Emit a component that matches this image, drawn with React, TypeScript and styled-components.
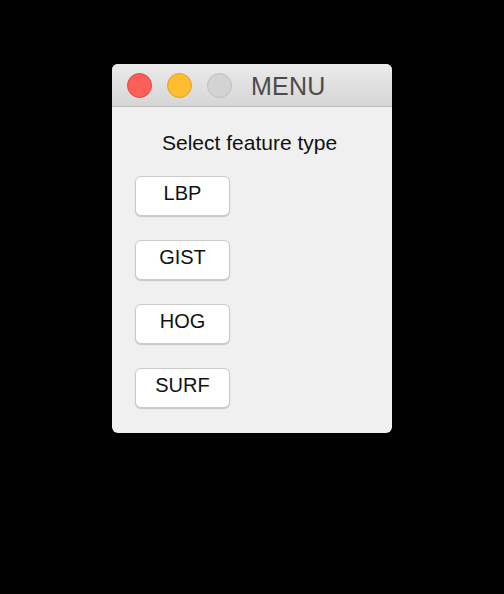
import React from "react";
import styled, { createGlobalStyle } from "styled-components";

const Global = createGlobalStyle`
  html, body { margin: 0; padding: 0; background: #000; }
  body { font-family: "Liberation Sans", Arial, sans-serif; }
`;

const Page = styled.div`
  width: 504px;
  height: 594px;
  box-sizing: border-box;
  padding: 64px 0 0 112px;
  background: #000;
`;

const Window = styled.div`
  width: 280px;
  border-radius: 6px;
  overflow: hidden;
  background: #f0f0f0;
`;

const TitleBar = styled.div`
  height: 42px;
  display: flex;
  align-items: center;
  padding: 0 0 0 15px;
  gap: 15px;
  background: linear-gradient(#ebebeb, #d6d6d6);
  border-bottom: 1px solid #b9b9b9;
`;

const Light = styled.span<{ $fill: string; $edge: string }>`
  width: 23px;
  height: 23px;
  border-radius: 50%;
  background: ${(p) => p.$fill};
  border: 1px solid ${(p) => p.$edge};
  flex: none;
`;

const Title = styled.span`
  margin-left: 4px;
  padding-top: 3px;
  font-size: 25px;
  color: #4b4b4b;
  letter-spacing: 0.2px;
`;

const Body = styled.div`
  padding: 24px 0 25px 23px;
  display: flex;
  flex-direction: column;
`;

const Prompt = styled.div`
  font-size: 21px;
  line-height: 24px;
  color: #111;
  padding-left: 27px;
  margin-bottom: 21px;
`;

const List = styled.div`
  display: flex;
  flex-direction: column;
  gap: 24px;
`;

const Button = styled.button`
  width: 95px;
  height: 40px;
  box-sizing: border-box;
  border: 1px solid #c9c9c9;
  border-radius: 6px;
  background: #fff;
  box-shadow: 0 1px 1px rgba(0, 0, 0, 0.18);
  font-family: "Liberation Sans", Arial, sans-serif;
  font-size: 20px;
  color: #111;
  padding: 0 0 5px 0;
  cursor: pointer;
`;

const features = ["LBP", "GIST", "HOG", "SURF"];

export default function App() {
  return (
    <Page>
      <Global />
      <Window>
        <TitleBar>
          <Light $fill="#fc5f57" $edge="#e3473f" />
          <Light $fill="#fdbd2f" $edge="#e0a226" />
          <Light $fill="#d3d3d3" $edge="#bfbfbf" />
          <Title>MENU</Title>
        </TitleBar>
        <Body>
          <Prompt>Select feature type</Prompt>
          <List>
            {features.map((f) => (
              <Button key={f}>{f}</Button>
            ))}
          </List>
        </Body>
      </Window>
    </Page>
  );
}
